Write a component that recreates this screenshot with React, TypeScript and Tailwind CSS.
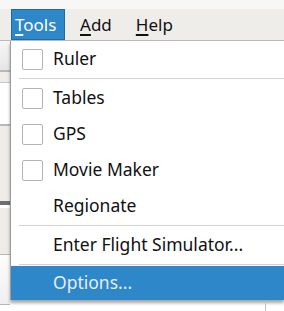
import React from 'react';

const font = { fontFamily: '"Noto Sans", "Open Sans", sans-serif' };

function Check() {
  return <div className="w-[21px] h-[21px] border border-[#b4b4b4] rounded-[2px] bg-white shrink-0" />;
}

function Item({ label, check }: { label: string; check?: boolean }) {
  return (
    <div className="h-[36px] flex items-center pl-[11px]">
      <div className="w-[31px] shrink-0">{check && <Check />}</div>
      <span className="text-[17.5px] text-[#111] leading-none">{label}</span>
    </div>
  );
}

function Sep() {
  return (
    <div className="h-[3px] flex items-center pl-[8px]">
      <div className="h-px w-full bg-[#d2d2d2]" />
    </div>
  );
}

function Key({ k, rest }: { k: string; rest: string }) {
  return (
    <span>
      <span className="underline underline-offset-[3px] decoration-[1.5px]">{k}</span>
      {rest}
    </span>
  );
}

export default function App() {
  return (
    <div className="w-[284px] h-[311px] bg-white overflow-hidden flex flex-col" style={font}>
      <div className="h-[9px] bg-[#f7f7f6] shrink-0" />
      <div className="h-[32px] bg-[#efedea] border-b border-[#b9b9b9] flex items-stretch text-[17px] shrink-0">
        <div className="w-[11px]" />
        <div className="w-[54px] bg-[#2e87c8] border border-[#1f6aa3] text-white flex items-center pl-[3px]">
          <Key k="T" rest="ools" />
        </div>
        <div className="flex items-center pl-[15px] text-[#111]">
          <Key k="A" rest="dd" />
        </div>
        <div className="flex items-center pl-[24px] text-[#111]">
          <Key k="H" rest="elp" />
        </div>
      </div>
      <div className="flex flex-1 min-h-0">
        <div className="w-[10px] flex flex-col shrink-0">
          <div className="h-[29px] bg-gradient-to-b from-[#f6f6f6] to-[#e6e6e6]" />
          <div className="h-[2px] bg-[#b8b8b8]" />
          <div className="h-[10px] bg-[#f0ede8]" />
          <div className="h-px bg-[#c8c8c8]" />
          <div className="h-[41px] bg-white" />
          <div className="h-[2px] bg-[#b8b8b8]" />
          <div className="h-[75px] bg-[#efebe6]" />
          <div className="h-[4px] bg-[#6e6e6e]" />
          <div className="h-[3px] bg-white" />
          <div className="h-[46px] bg-[#efebe6]" />
          <div className="h-px bg-[#b8b8b8]" />
          <div className="h-[49px] bg-gradient-to-b from-[#fdfdfd] to-[#efefef]" />
          <div className="h-px bg-[#b8b8b8]" />
          <div className="flex-1 bg-white" />
        </div>
        <div className="flex-1 flex flex-col">
          <div className="h-[259px] bg-white border-l border-[#9c9c9c] flex flex-col shrink-0 shadow-[0_3px_3px_rgba(0,0,0,0.35)]">
            <Item label="Ruler" check />
            <Sep />
            <Item label="Tables" check />
            <Item label="GPS" check />
            <Item label="Movie Maker" check />
            <Item label="Regionate" />
            <Sep />
            <Item label="Enter Flight Simulator..." />
            <Sep />
            <div className="h-[34px] bg-[#2e87c8] flex items-center pl-[42px]">
              <span className="text-[17.5px] text-[#e6eef7] leading-none">Options...</span>
            </div>
          </div>
          <div className="flex-1 flex justify-end pt-[3px]">
            <div className="w-[19px] border-l border-[#c4c4c4]" />
          </div>
        </div>
      </div>
    </div>
  );
}
